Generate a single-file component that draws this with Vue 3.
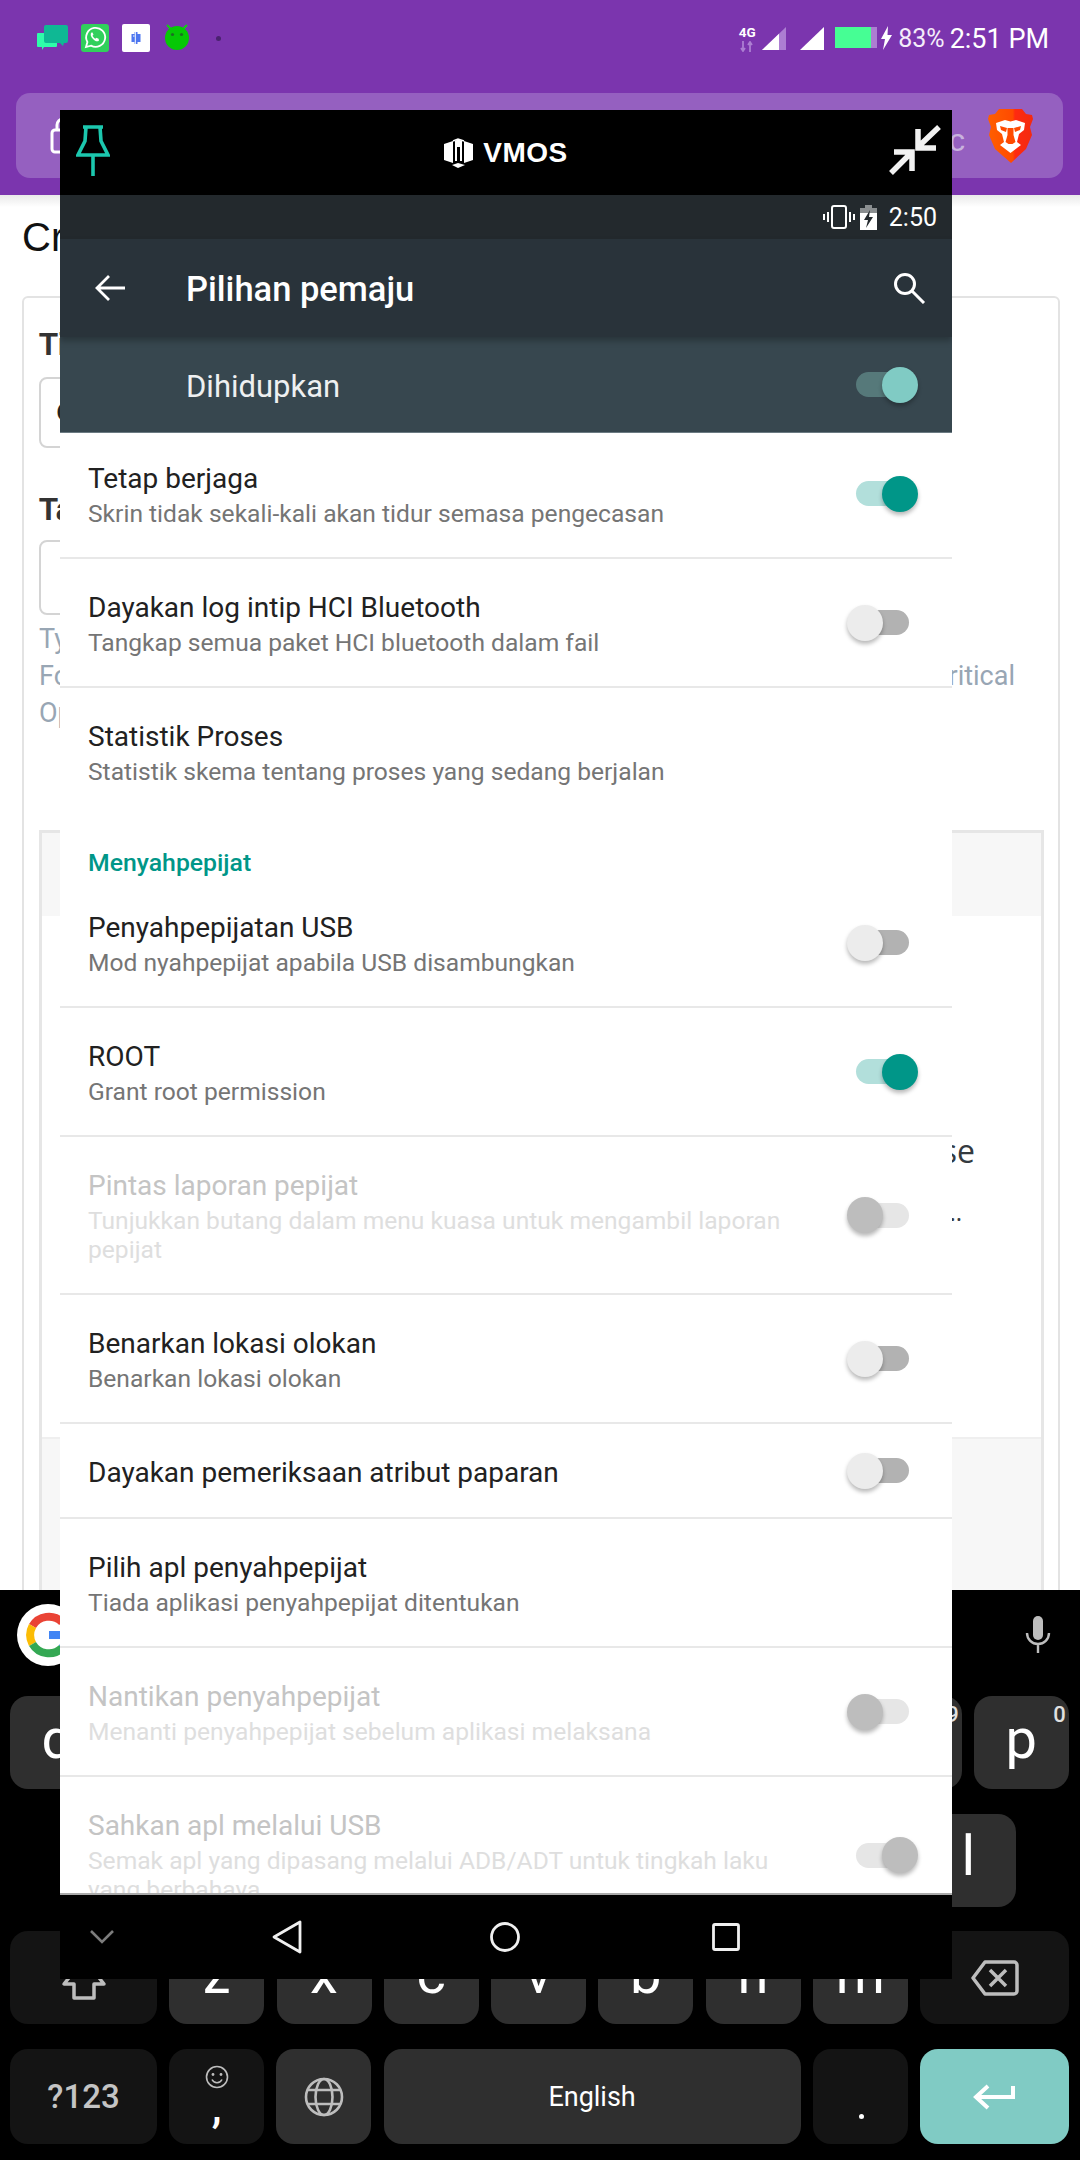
<script setup>
const rows = [
  { t: 'Tetap berjaga', s: 'Skrin tidak sekali-kali akan tidur semasa pengecasan', sw: 'on' },
  { t: 'Dayakan log intip HCI Bluetooth', s: 'Tangkap semua paket HCI bluetooth dalam fail', sw: 'off' },
  { t: 'Statistik Proses', s: 'Statistik skema tentang proses yang sedang berjalan', last: true },
  { section: 'Menyahpepijat' },
  { t: 'Penyahpepijatan USB', s: 'Mod nyahpepijat apabila USB disambungkan', sw: 'off' },
  { t: 'ROOT', s: 'Grant root permission', sw: 'on' },
  { t: 'Pintas laporan pepijat', s: 'Tunjukkan butang dalam menu kuasa untuk mengambil laporan pepijat', sw: 'off', dis: true },
  { t: 'Benarkan lokasi olokan', s: 'Benarkan lokasi olokan', sw: 'off' },
  { t: 'Dayakan pemeriksaan atribut paparan', sw: 'off' },
  { t: 'Pilih apl penyahpepijat', s: 'Tiada aplikasi penyahpepijat ditentukan' },
  { t: 'Nantikan penyahpepijat', s: 'Menanti penyahpepijat sebelum aplikasi melaksana', sw: 'off', dis: true },
  { t: 'Sahkan apl melalui USB', s: 'Semak apl yang dipasang melalui ADB/ADT untuk tingkah laku yang berbahaya', sw: 'on', dis: true }
]
const row1 = [['q', '1'], ['w', '2'], ['e', '3'], ['r', '4'], ['t', '5'], ['y', '6'], ['u', '7'], ['i', '8'], ['o', '9'], ['p', '0']]
const row2 = ['a', 's', 'd', 'f', 'g', 'h', 'j', 'k', 'l']
const row3 = ['z', 'x', 'c', 'v', 'b', 'n', 'm']
</script>

<template>
  <div class="screen">
    <header class="chrome">
      <div class="status">
        <div class="notifs">
          <svg class="i-chat" width="32" height="28" viewBox="0 0 32 28">
            <path d="M2 8h18a1 1 0 0 1 1 1v12a1 1 0 0 1-1 1H8l-2 3v-3H2a1 1 0 0 1-1-1V9a1 1 0 0 1 1-1z" fill="#2ffcaa"/>
            <path d="M10 0h20a2 2 0 0 1 2 2v14a2 2 0 0 1-2 2h-2l-1 3-3-3H10a2 2 0 0 1-2-2V2a2 2 0 0 1 2-2z" fill="#0fb894"/>
          </svg>
          <svg width="28" height="28" viewBox="0 0 28 28">
            <rect width="28" height="28" rx="3" fill="#31d05c"/>
            <path d="M5 23l1.4-5A9.5 9.5 0 1 1 10 21.6z" fill="none" stroke="#fff" stroke-width="1.8"/>
            <path d="M10.5 8.5c-1.5 1.5-.8 4 1.5 6.500s4.500 3 6 1.500l-.4-1.800-2.300-1-1 1c-1-.5-2.300-1.800-2.800-2.900l1-1-1-2.300z" fill="#fff"/>
          </svg>
          <svg width="28" height="28" viewBox="0 0 28 28">
            <rect width="28" height="28" rx="2" fill="#fff"/>
            <path d="M9.500 10h3v-2h3v2h3v8h-3v2h-3v-2h-3z" fill="#4d76f0"/>
            <path d="M13.300 8v12M11 12h1.500" stroke="#fff" stroke-width="1"/>
          </svg>
          <svg class="i-droid" width="24" height="26" viewBox="0 0 24 26">
            <path d="M2 1l5 5M22 1l-5 5" stroke="#11d011" stroke-width="2"/>
            <circle cx="12" cy="14" r="12" fill="#06c806"/>
            <circle cx="7.500" cy="10.500" r="1.600" fill="#1d6e24"/>
            <circle cx="16.500" cy="10.500" r="1.600" fill="#1d6e24"/>
          </svg>
          <span class="dot"></span>
        </div>
        <div class="sys">
          <div class="net"><span class="g4">4G</span>
            <svg width="14" height="11" viewBox="0 0 14 11"><path d="M3 0v10M1 7l2 3 2-3M10 11V1M8 4l2-3 2 3" stroke="#ac7ed2" stroke-width="1.800" fill="none"/></svg>
          </div>
          <svg class="sig" width="24" height="23" viewBox="0 0 24 23">
            <path d="M0 23L24 0v23z" fill="#ac7ed2"/><path d="M0 23L17 6.700V23z" fill="#fff"/>
          </svg>
          <svg class="sig2" width="24" height="23" viewBox="0 0 24 23"><path d="M0 23L24 0v23z" fill="#fff"/></svg>
          <div class="batt"><span></span></div>
          <svg class="bolt" width="13" height="24" viewBox="0 0 13 24"><path d="M8 0L1 13h4l-2 11 9-15H7.500z" fill="#fff"/></svg>
          <span class="pct">83%</span>
          <span class="clock">2:51 PM</span>
        </div>
      </div>
      <div class="addr">
        <svg class="lock" width="26" height="38" viewBox="0 0 26 38">
          <rect x="2" y="14" width="22" height="22" rx="3" fill="none" stroke="#fff" stroke-width="3"/>
          <path d="M7 14V9a6 6 0 0 1 12 0v5" fill="none" stroke="#fff" stroke-width="3"/>
        </svg>
        <span class="url">c</span>
        <svg class="brave" width="45" height="54" viewBox="0 0 45 54">
          <defs>
            <linearGradient id="bg" x1="0" x2="1" y1="0" y2="0">
              <stop offset="0" stop-color="#ff5f00"/><stop offset=".55" stop-color="#ff4a00"/><stop offset=".6" stop-color="#ff2a10"/><stop offset="1" stop-color="#f22a10"/>
            </linearGradient>
          </defs>
          <path d="M11 0h23l4 5 6 1 1 4-3 8 2 8-6 14-15 14L7 40 1 26l2-8-3-8 1-4 6-1z" fill="url(#bg)"/>
          <path d="M8 14l9-3 5.500 1.500L28 11l9 3-1 7-5 4-2 8 4 3-10.500 8L12 36l4-3-2-8-5-4z" fill="#fff"/>
          <path d="M12 17l7 2-1 4-5-2zM33 17l-7 2 1 4 5-2z" fill="#ff4a00"/>
          <path d="M19.500 19v7l-2 7 3 2h4l3-2-2-7v-7z" fill="#ff4a00"/>
          <path d="M16 38l6.500-3 6.500 3-6.500 5z" fill="#fff"/>
        </svg>
      </div>
    </header>

    <main class="page">
      <h1 class="ptitle">Create</h1>
      <section class="card">
        <label class="lbl">Title</label>
        <div class="inp inp-a">C</div>
        <label class="lbl lbl2">Tags</label>
        <div class="inp inp-b"></div>
        <div class="hints">
          <p>Type</p>
          <p class="split"><span>For</span><span>Critical</span></p>
          <p>Optional</p>
        </div>
        <div class="tbl">
          <div class="thead"></div>
          <div class="tbody"><p class="tb1">Choose</p><p class="tb2">...</p></div>
          <div class="tfoot"></div>
        </div>
      </section>
    </main>

    <footer class="kbd">
      <div class="sugg">
        <div class="gcircle">
          <svg width="48" height="48" viewBox="0 0 48 48">
            <g fill="none" stroke-width="8">
              <path d="M38 11a19 19 0 0 0-29.500 4" stroke="#ea4335"/>
              <path d="M8.500 15a19 19 0 0 0 0 18" stroke="#fbbc05"/>
              <path d="M8.500 33a19 19 0 0 0 29.500 4" stroke="#34a853"/>
              <path d="M38 37a19 19 0 0 0 5-13H25" stroke="#4285f4"/>
            </g>
          </svg>
        </div>
        <svg class="mic" width="28" height="38" viewBox="0 0 28 38">
          <rect x="9" y="0" width="10" height="24" rx="5" fill="#bdbdbd"/>
          <path d="M3 17a11 11 0 0 0 22 0M14 28v9" fill="none" stroke="#bdbdbd" stroke-width="2.400"/>
        </svg>
      </div>
      <div class="krow r1">
        <div v-for="k in row1" :key="k[0]" class="key"><span class="lt">{{ k[0] }}</span><sup class="num">{{ k[1] }}</sup></div>
      </div>
      <div class="krow r2">
        <div v-for="k in row2" :key="k" class="key"><span class="lt">{{ k }}</span></div>
      </div>
      <div class="krow r3">
        <div class="key dark shift">
          <svg width="46" height="44" viewBox="0 0 46 44"><path d="M23 3L3 28h10v14h20V28h10z" fill="none" stroke="#bdbdbd" stroke-width="3.500" stroke-linejoin="round"/></svg>
        </div>
        <div v-for="k in row3" :key="k" class="key"><span class="lt">{{ k }}</span></div>
        <div class="key dark del">
          <svg width="48" height="38" viewBox="0 0 48 38"><path d="M14 3h29a3 3 0 0 1 3 3v26a3 3 0 0 1-3 3H14L2 19z" fill="none" stroke="#bdbdbd" stroke-width="3.500" stroke-linejoin="round"/><path d="M19 11l16 16M35 11L19 27" stroke="#bdbdbd" stroke-width="3.500"/></svg>
        </div>
      </div>
      <div class="krow r4">
        <div class="key dark sym">?123</div>
        <div class="key dark comma">
          <svg width="24" height="24" viewBox="0 0 24 24"><circle cx="12" cy="12" r="10.500" fill="none" stroke="#bdbdbd" stroke-width="1.600"/><circle cx="8" cy="9.500" r="1.400" fill="#bdbdbd"/><circle cx="16" cy="9.500" r="1.400" fill="#bdbdbd"/><path d="M7 14.500a5.500 5.500 0 0 0 10 0" fill="none" stroke="#bdbdbd" stroke-width="1.600"/></svg>
          <span class="cm">,</span>
        </div>
        <div class="key globe">
          <svg width="40" height="40" viewBox="0 0 40 40" fill="none" stroke="#bdbdbd" stroke-width="2.600"><circle cx="20" cy="20" r="18"/><ellipse cx="20" cy="20" rx="8.500" ry="18"/><path d="M3.500 13h33M3.500 27h33"/></svg>
        </div>
        <div class="key space">English</div>
        <div class="key dark period"><span></span></div>
        <div class="key enter">
          <svg width="42" height="26" viewBox="0 0 42 26" fill="none" stroke="#fff" stroke-width="4"><path d="M40 2v11H4"/><path d="M15 2L3 13l12 11"/></svg>
        </div>
      </div>
    </footer>

    <div class="win">
      <div class="vhead">
        <svg class="pin" width="34" height="52" viewBox="0 0 34 52" fill="none" stroke="#1cc7ae" stroke-width="3.600">
          <path d="M7 2h20M10 2l-1 14-7 14h30l-7-14-1-14M17 30v21" filter="url(#glow)"/>
          <defs><filter id="glow" x="-30%" y="-10%" width="160%" height="120%"><feGaussianBlur stdDeviation=".7"/></filter></defs>
        </svg>
        <div class="logo">
          <svg width="31" height="30" viewBox="0 0 31 30">
            <path d="M1 6l9-3v22l-9-3zM30 6l-9-3v22l9-3zM12 3l3-2 4 2v20h-2V9h-3v14h-2zM9 27l6-2 7 2-7 3z" fill="#fff"/>
            <path d="M10 3l5-2 6 2" fill="none" stroke="#fff" stroke-width="1.500"/>
          </svg>
          <span class="vmos">VMOS</span>
        </div>
        <svg class="shrink" width="52" height="50" viewBox="0 0 52 50" fill="none" stroke="#f2f2f2" stroke-width="5.500" filter="url(#glow2)">
          <defs><filter id="glow2" x="-10%" y="-10%" width="120%" height="120%"><feGaussianBlur stdDeviation=".5"/></filter></defs>
          <path d="M50 2L29 22M29 4v19h18"/>
          <path d="M2 48l20-20M23 46V27H5"/>
        </svg>
      </div>
      <div class="astat">
        <svg width="32" height="24" viewBox="0 0 32 24" fill="none" stroke="#fff" stroke-width="2">
          <rect x="9" y="1" width="14" height="22" rx="2"/><path d="M5 7v10M1 9v6M27 7v10M31 9v6"/>
        </svg>
        <svg class="abatt" width="17" height="25" viewBox="0 0 17 25">
          <path d="M5 0h7v3h5v5H0V3h5z" fill="#8a8e90"/><path d="M0 8h17v17H0z" fill="#fff"/>
          <path d="M10 5L4 15h4l-2 8 7-11H9z" fill="#23292d"/>
        </svg>
        <span class="atime">2:50</span>
      </div>
      <div class="abar">
        <svg width="30" height="26" viewBox="0 0 30 26" fill="none" stroke="#fff" stroke-width="2.800"><path d="M30 13H2M14 1L2 13l12 12"/></svg>
        <span class="atitle">Pilihan pemaju</span>
        <svg class="srch" width="34" height="32" viewBox="0 0 34 32" fill="none" stroke="#fff" stroke-width="3"><circle cx="12" cy="12" r="9.500"/><path d="M19 19l12 12"/></svg>
      </div>
      <div class="master">
        <span class="mtxt">Dihidupkan</span>
        <div class="sw master-sw"><i></i><b></b></div>
      </div>
      <div class="scroller">
        <div class="list">
          <template v-for="r in rows" :key="r.t || r.section">
            <div v-if="r.section" class="section">{{ r.section }}</div>
            <div v-else class="row" :class="{ dis: r.dis, single: !r.s, last: r.last }">
              <div class="txt">
                <div class="t">{{ r.t }}</div>
                <div v-if="r.s" class="s">{{ r.s }}</div>
              </div>
              <div v-if="r.sw" class="sw" :class="r.sw"><i></i><b></b></div>
            </div>
          </template>
        </div>
      </div>
      <div class="nav">
        <svg class="nchev" width="24" height="14" viewBox="0 0 24 14" fill="none" stroke="#7c7c7c" stroke-width="2.600"><path d="M1 1l11 11L23 1"/></svg>
        <svg class="nback" width="30" height="34" viewBox="0 0 30 34" fill="none" stroke="#f0f0f0" stroke-width="2.800" stroke-linejoin="round"><path d="M28 2v30L2 17z"/></svg>
        <svg class="nhome" width="30" height="30" viewBox="0 0 30 30" fill="none" stroke="#f0f0f0" stroke-width="2.800"><circle cx="15" cy="15" r="13.500"/></svg>
        <svg class="nrec" width="28" height="28" viewBox="0 0 28 28" fill="none" stroke="#f0f0f0" stroke-width="2.800"><rect x="1.500" y="1.500" width="25" height="25" rx="1.500"/></svg>
      </div>
    </div>
  </div>
</template>

<style>
html, body { margin: 0; padding: 0; background: #000; }
</style>

<style scoped>
.screen {
  position: relative; width: 1080px; height: 2160px; overflow: hidden;
  display: flex; flex-direction: column; background: #fff;
  font-family: Roboto, "Noto Sans", sans-serif;
}
p, h1 { margin: 0; font-weight: normal; }

/* Browser chrome */
.chrome { height: 195px; flex: none; background: #7b35ae; box-sizing: border-box; }
.status { height: 93px; box-sizing: border-box; padding: 24px 31px 0 36px; display: flex; justify-content: space-between; align-items: flex-start; }
.notifs { display: flex; align-items: flex-start; gap: 13px; }
.i-chat { margin-top: 1px; }
.i-droid { margin-left: 2px; margin-top: 0; }
.dot { width: 5px; height: 5px; border-radius: 50%; background: #4a2270; margin: 12px 0 0 14px; }
.sys { display: flex; align-items: flex-start; color: #fff; }
.net { width: 18px; display: flex; flex-direction: column; align-items: center; }
.g4 { font-size: 13.500px; line-height: 13px; font-weight: 700; margin-top: 2px; }
.net svg { margin-top: 2px; }
.sig { margin: 3px 0 0 6px; }
.sig2 { margin: 3px 0 0 14px; }
.batt { width: 42px; height: 21px; margin: 3px 0 0 11px; background: #ac7ed2; }
.batt span { display: block; height: 100%; width: 36px; background: #46fe94; }
.bolt { margin: 2px 0 0 3px; }
.pct { font-size: 25px; line-height: 30px; margin-left: 5px; color: #f4ecfa; }
.clock { font-size: 27px; line-height: 30px; margin-left: 5px; }
.addr {
  height: 85px; margin: 0 17px 0 16px; background: #9560c0; border-radius: 14px;
  display: flex; align-items: center; position: relative;
}
.lock { position: absolute; left: 34px; top: 23px; }
.url { position: absolute; left: 933px; top: 28px; font-size: 32px; line-height: 38px; color: #c9b3de; font-family: "Liberation Sans", sans-serif; }
.brave { position: absolute; left: 972px; top: 16px; }

/* Web page */
.page { flex: 1; min-height: 0; overflow: hidden; padding: 0 20px 0 22px; background: linear-gradient(#e9e9e9 0, #fff 12px); }
.ptitle { padding-top: 19px; font-size: 40px; line-height: 46px; height: 101px; box-sizing: border-box; color: #111; font-family: "Liberation Sans", sans-serif; }
.card { border: 2px solid #e3e3e3; border-radius: 6px; padding: 27px 14px 0 15px; height: 1400px; box-sizing: border-box; background: #fff; font-family: "Liberation Sans", sans-serif; }
.lbl { display: block; font-size: 31px; line-height: 40px; font-weight: 700; color: #333; }
.lbl2 { margin-top: 42px; }
.inp { border: 2px solid #d4d4d4; border-radius: 8px; width: 500px; box-sizing: border-box; }
.inp-a { margin-top: 12px; height: 71px; padding-left: 15px; line-height: 66px; font-size: 30px; color: #222; }
.inp-b { margin-top: 10px; height: 75px; }
.hints { margin-top: 6px; width: 976px; font-size: 27px; line-height: 37px; color: #98a6b4; font-family: Roboto, sans-serif; }
.split { display: flex; justify-content: space-between; }
.tbl { margin-top: 98px; border: 3px solid #e6e6e6; border-bottom: 0; background: #fff; }
.thead { height: 83px; background: #f7f7f7; }
.tbody { height: 523px; box-sizing: border-box; padding: 214px 66px 0 0; text-align: right; border-bottom: 2px solid #efefef; font-family: "Open Sans", sans-serif; color: #343a40; }
.tb1 { font-size: 32px; line-height: 42px; }
.tb2 { font-size: 24px; line-height: 30px; margin-top: 25px; padding-right: 13px; }
.tfoot { height: 300px; background: #f7f7f7; }

/* Keyboard */
.kbd { height: 570px; flex: none; background: #000; box-sizing: border-box; color: #fff; }
.sugg { height: 106px; position: relative; }
.gcircle { position: absolute; left: 17px; top: 14px; width: 62px; height: 62px; border-radius: 50%; background: #fff; display: flex; align-items: center; justify-content: center; }
.mic { position: absolute; left: 1024px; top: 26px; }
.krow { display: flex; gap: 12.100px; padding-left: 10px; margin-bottom: 24.700px; }
.r2 { padding-left: 64px; }
.r3 { gap: 12.250px; }
.r4 { gap: 12.200px; }
.key { position: relative; width: 95px; height: 93px; flex: none; border-radius: 18px; background: #2f2f2f; display: flex; align-items: center; justify-content: center; box-sizing: border-box; }
.lt { font-size: 56px; line-height: 93px; margin-top: -7px; color: #fff; }
.num { position: absolute; right: 3px; top: 7px; font-size: 22px; line-height: 24px; font-weight: 500; color: #e0e0e0; }
.dark { background: #141414; }
.shift { width: 147px; }
.del { width: 149px; }
.r4 .key { height: 95px; }
.sym { width: 147px; font-size: 33px; font-weight: 500; color: #c4c4c4; }
.comma { flex-direction: column; justify-content: flex-start; padding-top: 16px; }
.cm { font-size: 44px; line-height: 40px; margin-top: -2px; font-weight: 500; }
.space { width: 417px; font-size: 27px; color: #fff; }
.period span { position: absolute; left: 46px; top: 65px; width: 5px; height: 5px; border-radius: 50%; background: #fff; }
.enter { width: 149px; background: #80cbc4; }

/* VMOS window */
.win { position: absolute; left: 60px; top: 110px; width: 892px; height: 1869px; display: flex; flex-direction: column; background: #000; overflow: hidden; }
.vhead { height: 85px; flex: none; position: relative; display: flex; align-items: center; justify-content: center; background: #000; }
.pin { position: absolute; left: 16px; top: 15px; }
.shrink { position: absolute; left: 829px; top: 15px; }
.logo { display: flex; align-items: center; gap: 9px; margin-left: -1px; margin-top: 1px; }
.vmos { font-family: "Liberation Sans", sans-serif; font-weight: 700; font-size: 28px; line-height: 32px; color: #fff; letter-spacing: .5px; }
.astat { height: 44px; flex: none; background: #23292d; display: flex; align-items: center; justify-content: flex-end; padding-right: 15px; color: #fff; }
.abatt { margin-left: 5px; }
.atime { font-size: 25px; margin-left: 12px; }
.abar { height: 98px; flex: none; background: #29333a; display: flex; align-items: center; position: relative; color: #fff; padding-left: 35px; box-sizing: border-box; box-shadow: 0 4px 6px rgba(0,0,0,.25); z-index: 1; }
.atitle { margin: 2px 0 0 61px; font-size: 34.500px; font-weight: 500; }
.srch { position: absolute; left: 833px; top: 33px; }
.master { height: 96px; flex: none; background: #37474f; display: flex; align-items: center; justify-content: space-between; padding: 0 34px 0 126px; color: #eef0f1; font-size: 31px; border-bottom: 1px solid #6b7a82; box-sizing: border-box; }
.mtxt { margin-top: 3px; }
.scroller { height: 1462px; flex: none; overflow: hidden; background: #fff; border-bottom: 2px solid #aaa; box-sizing: border-box; }
.list { margin-top: -3px; }
.row { display: flex; align-items: center; justify-content: space-between; padding: 0 34px 0 28px; border-bottom: 2px solid #e8e8e8; box-sizing: border-box; }
.row.last { border-bottom-color: transparent; }
.txt { width: 712px; padding: 28px 0 29px; }
.single .txt { padding-bottom: 24px; }
.t { font-size: 28px; line-height: 41px; color: #212121; white-space: nowrap; }
.s { font-size: 24.600px; line-height: 29px; color: #757575; }
.dis .t { color: #c4c4c4; }
.dis .s { color: #dedede; }
.section { height: 62px; padding: 30px 0 0 28px; box-sizing: border-box; font-size: 24.800px; line-height: 32px; font-weight: 500; color: #009688; }

/* Switches */
.sw { position: relative; width: 71px; height: 36px; flex: none; }
.sw i { position: absolute; left: 9px; top: 5.500px; width: 53px; height: 25px; border-radius: 13px; background: #b2b2b2; }
.sw b { position: absolute; left: 0; top: 0; width: 36px; height: 36px; border-radius: 50%; background: #ececec; box-shadow: 0 3px 4px rgba(0,0,0,.28); }
.sw.on i { background: #b2dfdb; }
.sw.on b { left: 35px; background: #009688; }
.dis .sw i { background: #e6e6e6; }
.dis .sw b { background: #bdbdbd; }
.master-sw i { background: #56797a; }
.master-sw b { left: 35px; background: #80cbc4; }

.nav { height: 84px; flex: none; background: #000; display: flex; align-items: center; padding-left: 30px; box-sizing: border-box; }
.nback { margin-left: 158px; }
.nhome { margin-left: 188px; }
.nrec { margin-left: 192px; }
</style>
